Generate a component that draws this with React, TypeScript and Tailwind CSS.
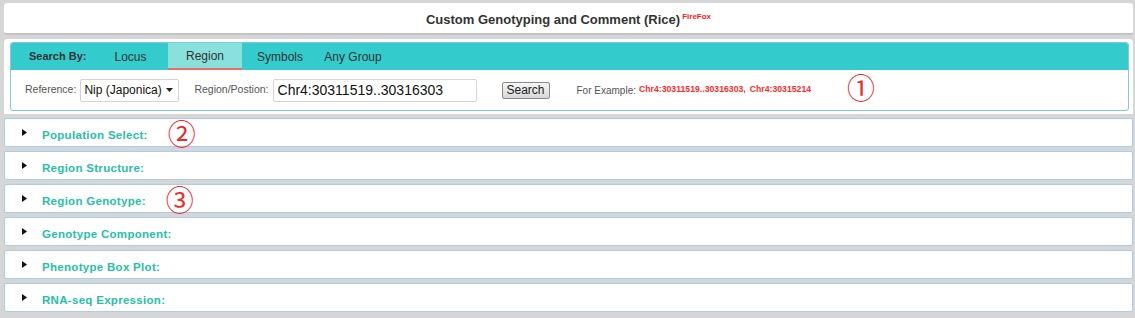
import React from "react";

const sans = { fontFamily: '"Liberation Sans", Arial, sans-serif' };

const sections = [
    { label: "Population Select:", mark: "②", gap: 20 },
    { label: "Region Structure:" },
    { label: "Region Genotype:", mark: "③", gap: 20 },
    { label: "Genotype Component:" },
    { label: "Phenotype Box Plot:" },
    { label: "RNA-seq Expression:" },
];

function Circled({ children }: { children: React.ReactNode }) {
    return (
        <span
            className="text-[28px] leading-none text-[#ee2b2b]"
            style={{ fontFamily: '"Noto Sans CJK SC", "DejaVu Sans", sans-serif' }}
        >
            {children}
        </span>
    );
}

export default function App() {
    return (
        <div className="w-[1135px] h-[318px] overflow-hidden bg-[#d6d6d6] pl-[4px] pr-[2px] pt-[3px]" style={sans}>
            {/* Title */}
            <div className="h-[32px] pt-[3px] bg-white rounded-[3px] border-b-2 border-[#c4c4c4] flex items-center justify-center">
                <span className="text-[13px] font-bold text-[#333]">Custom Genotyping and Comment (Rice)</span>
                <span className="text-[8px] font-bold text-[#ff2020] ml-[2px] -mt-[6px]">FireFox</span>
            </div>

            {/* Search panel */}
            <div className="mt-[4px] bg-white rounded-t-[4px] pl-[6px] pr-[4px] pt-[3px] pb-[3px]">
                <div className="border border-[#80cbd9] rounded-[3px] overflow-hidden">
                    <div className="h-[27px] bg-[#33cbcb] flex items-stretch text-[12px] text-[#333]">
                        <div className="w-[82px] pl-[18px] flex items-center font-bold text-[11px]">Search By:</div>
                        <div className="w-[75px] flex items-center justify-center">Locus</div>
                        <div className="w-[74px] flex items-center justify-center bg-[#89e1dd] border-b-2 border-[#f06a6a]">Region</div>
                        <div className="w-[76px] flex items-center justify-center">Symbols</div>
                        <div className="w-[70px] flex items-center justify-center">Any Group</div>
                    </div>
                    <div className="h-[40px] flex items-center pl-[14px]">
                        <span className="text-[10.5px] text-[#555]">Reference:</span>
                        <div className="ml-[4px] w-[99px] h-[23px] border border-[#d2d2d2] rounded-[2px] flex items-center justify-between pl-[3px] pr-[5px] text-[12px] text-[#111]">
                            <span>Nip (Japonica)</span>
                            <svg width="7" height="4" viewBox="0 0 7 4"><path d="M0 0h7L3.5 4z" fill="#222" /></svg>
                        </div>
                        <span className="ml-[15px] text-[10.5px] text-[#555]">Region/Postion:</span>
                        <div className="ml-[4px] w-[204px] h-[23px] border border-[#d6d6d6] rounded-[2px] flex items-center pl-[4px] text-[14px] text-[#111]">
                            Chr4:30311519..30316303
                        </div>
                        <button className="ml-[25px] w-[48px] h-[17px] border border-[#8a8a8a] rounded-[2px] bg-gradient-to-b from-[#f6f6f6] to-[#d8d8d8] text-[12px] leading-none text-[#222]">
                            Search
                        </button>
                        <span className="ml-[27px] text-[10px] text-[#555]">For Example:</span>
                        <span className="ml-[3px] text-[8.7px] font-bold text-[#ff2a2a]">Chr4:30311519..30316303,</span>
                        <span className="ml-[4px] text-[8.7px] font-bold text-[#ff2a2a]">Chr4:30315214</span>
                        <span className="ml-[36px] -mt-[1px]"><Circled>①</Circled></span>
                    </div>
                </div>
            </div>

            {/* Collapsible sections */}
            {sections.map((s) => (
                <div
                    key={s.label}
                    className="mt-[4px] h-[29px] bg-white border border-[#a9cdec] rounded-[2px] flex items-start pl-[17px] pt-[9px]"
                >
                    <svg width="5" height="7" viewBox="0 0 5 7" className="mt-[1px]"><path d="M0 0l5 3.5L0 7z" fill="#111" /></svg>
                    <span className="ml-[15px] mt-[1px] text-[11.5px] leading-[13px] font-bold text-[#25c1a6] tracking-[0.3px]">{s.label}</span>
                    {s.mark && (
                        <span className="-mt-[9px]" style={{ marginLeft: s.gap }}>
                            <Circled>{s.mark}</Circled>
                        </span>
                    )}
                </div>
            ))}
        </div>
    );
}
